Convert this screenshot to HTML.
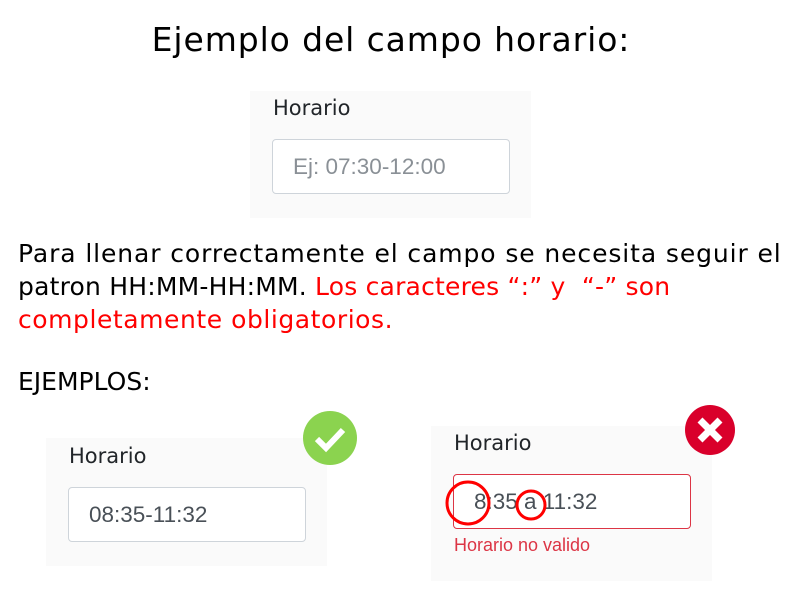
<!DOCTYPE html>
<html><head><meta charset="utf-8"><style>
body{margin:0;width:800px;height:600px;background:#fff;font-family:"DejaVu Sans","Liberation Sans",sans-serif;position:relative;overflow:hidden}
.a{position:absolute;white-space:nowrap}
.panel{position:absolute;background:#fafafa}
.lbl{position:absolute;font-size:21px;color:#212529;font-family:"DejaVu Sans",sans-serif}
.inp{position:absolute;background:#fff;border:1px solid #ced4da;border-radius:4px;box-sizing:border-box;font-size:22.5px;color:#495057;font-family:"Liberation Sans",sans-serif;padding-left:20px;line-height:53px}
</style></head><body>
<div class="a" style="left:0;width:782px;text-align:center;top:20px;font-size:33px;letter-spacing:0.9px;color:#000">Ejemplo del campo horario:</div>
<div class="panel" style="left:250px;top:91px;width:281px;height:127px"></div>
<div class="lbl" style="left:273px;top:96px">Horario</div>
<div class="inp" style="left:272px;top:139px;width:238px;height:55px;color:#8a9096">Ej: 07:30-12:00</div>
<div class="a" style="left:18px;top:237px;font-size:25px;letter-spacing:0.9px;line-height:33px;color:#000">Para llenar correctamente el campo se necesita seguir el<br><span style="letter-spacing:0.2px">patron HH:MM-HH:MM. <span style="color:#f00">Los caracteres “:” y &nbsp;“-” son</span></span><br><span style="color:#f00;letter-spacing:0.55px">completamente obligatorios.</span></div>
<div class="a" style="left:18px;top:367px;font-size:25px;color:#000">EJEMPLOS:</div>
<div class="panel" style="left:46px;top:438px;width:281px;height:128px"></div>
<div class="lbl" style="left:69px;top:444px">Horario</div>
<div class="inp" style="left:68px;top:487px;width:238px;height:55px">08:35-11:32</div>
<svg class="a" style="left:303px;top:411px" width="54" height="54"><circle cx="27" cy="27" r="27" fill="#8bd34f"/><path d="M14 28l9 9 17-18" stroke="#fff" stroke-width="6" fill="none"/></svg>
<div class="panel" style="left:431px;top:426px;width:281px;height:155px"></div>
<div class="lbl" style="left:454px;top:431px">Horario</div>
<div class="inp" style="left:453px;top:474px;width:238px;height:55px;border-color:#dc3545">8:35 a 11:32</div>
<div class="a" style="left:454px;top:535px;font-size:18px;color:#dc3545;font-family:'Liberation Sans',sans-serif">Horario no valido</div>
<svg class="a" style="left:443px;top:480px" width="110" height="50"><circle cx="25" cy="23" r="21" fill="none" stroke="#f00" stroke-width="3"/><circle cx="88" cy="25" r="14" fill="none" stroke="#f00" stroke-width="3"/></svg>
<svg class="a" style="left:684px;top:404px" width="52" height="52"><circle cx="26" cy="26" r="25" fill="#d9002b"/><path d="M16 16l20 20M36 16l-20 20" stroke="#fff" stroke-width="7"/></svg>
</body></html>
